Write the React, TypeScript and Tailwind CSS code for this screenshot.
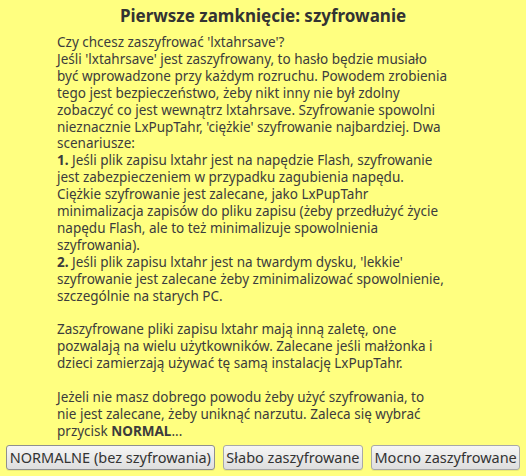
export default function App() {
  const font = { fontFamily: '"Noto Sans", "DejaVu Sans", sans-serif' };
  return (
    <div
      className="w-[526px] h-[476px] bg-[#ffff80] text-[#3c3c3c] flex flex-col overflow-hidden"
      style={font}
    >
      {/* Title */}
      <h1 className="text-center font-bold text-[17px] leading-[22px] mt-[5px] text-[#333333]">
        Pierwsze zamknięcie: szyfrowanie
      </h1>

      {/* Message */}
      <div className="pl-[57px] text-[13.5px] leading-[16.9px] mt-[7px] whitespace-nowrap">
        Czy chcesz zaszyfrować 'lxtahrsave'?
        <br />
        Jeśli 'lxtahrsave' jest zaszyfrowany, to hasło będzie musiało
        <br />
        być wprowadzone przy każdym rozruchu. Powodem zrobienia
        <br />
        tego jest bezpieczeństwo, żeby nikt inny nie był zdolny
        <br />
        zobaczyć co jest wewnątrz lxtahrsave. Szyfrowanie spowolni
        <br />
        nieznacznie LxPupTahr, 'ciężkie' szyfrowanie najbardziej. Dwa
        <br />
        scenariusze:
        <br />
        <b>1.</b> Jeśli plik zapisu lxtahr jest na napędzie Flash, szyfrowanie
        <br />
        jest zabezpieczeniem w przypadku zagubienia napędu.
        <br />
        Ciężkie szyfrowanie jest zalecane, jako LxPupTahr
        <br />
        minimalizacja zapisów do pliku zapisu (żeby przedłużyć życie
        <br />
        napędu Flash, ale to też minimalizuje spowolnienia
        <br />
        szyfrowania).
        <br />
        <b>2.</b> Jeśli plik zapisu lxtahr jest na twardym dysku, 'lekkie'
        <br />
        szyfrowanie jest zalecane żeby zminimalizować spowolnienie,
        <br />
        szczególnie na starych PC.
        <br />
        <br />
        Zaszyfrowane pliki zapisu lxtahr mają inną zaletę, one
        <br />
        pozwalają na wielu użytkowników. Zalecane jeśli małżonka i
        <br />
        dzieci zamierzają używać tę samą instalację LxPupTahr.
        <br />
        <br />
        Jeżeli nie masz dobrego powodu żeby użyć szyfrowania, to
        <br />
        nie jest zalecane, żeby uniknąć narzutu. Zaleca się wybrać
        <br />
        przycisk <b>NORMAL</b>...
      </div>

      {/* Buttons */}
      <div className="flex gap-2 px-[6px] mt-auto mb-[6px] text-[14.5px]">
        <button className="w-[209px] h-[25px] rounded-[3px] border border-[#8f8f8f] bg-gradient-to-b from-[#f6f6f6] to-[#dedede] text-[#333333] shadow-[0_1px_0_rgba(0,0,0,0.08)]">
          NORMALNE (bez szyfrowania)
        </button>
        <button className="w-[141px] h-[25px] rounded-[3px] border border-[#a8a8a8] bg-gradient-to-b from-[#f6f6f6] to-[#dedede] text-[#333333] shadow-[0_1px_0_rgba(0,0,0,0.08)]">
          Słabo zaszyfrowane
        </button>
        <button className="w-[149px] h-[25px] rounded-[3px] border border-[#a8a8a8] bg-gradient-to-b from-[#f6f6f6] to-[#dedede] text-[#333333] shadow-[0_1px_0_rgba(0,0,0,0.08)]">
          Mocno zaszyfrowane
        </button>
      </div>
    </div>
  );
}
